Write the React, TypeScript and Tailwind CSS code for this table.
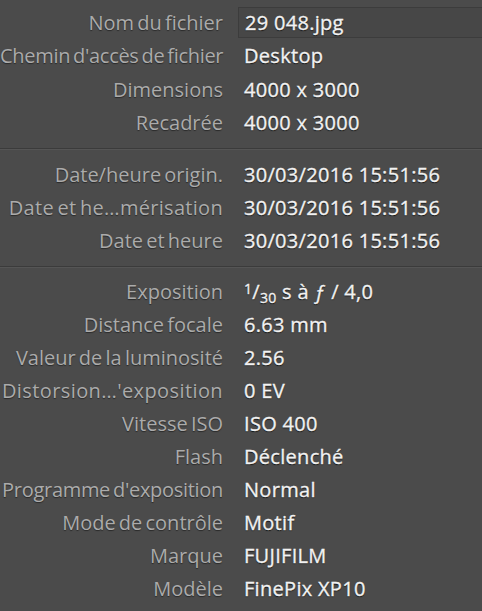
import React from 'react';

type Row = { label: string; value: React.ReactNode; boxed?: boolean; fit?: string };

const sections: Row[][] = [
  [
    { label: 'Nom du fichier', value: '29 048.jpg', boxed: true },
    { label: "Chemin d'accès de fichier", value: 'Desktop', fit: 'tracking-[-0.3px]' },
    { label: 'Dimensions', value: '4000 x 3000' },
    { label: 'Recadrée', value: '4000 x 3000' },
  ],
  [
    { label: 'Date/heure origin.', value: '30/03/2016 15:51:56' },
    { label: 'Date et he…mérisation', value: '30/03/2016 15:51:56', fit: 'tracking-[0.3px]' },
    { label: 'Date et heure', value: '30/03/2016 15:51:56' },
  ],
  [
    {
      label: 'Exposition',
      value: (
        <span>
          <span className="relative -top-[5px] text-[14px]">1</span>
          <span>/</span>
          <span className="relative top-[4px] text-[14px]">30</span> s à <span className="italic">ƒ</span> / 4,0
        </span>
      ),
    },
    { label: 'Distance focale', value: '6.63 mm' },
    { label: 'Valeur de la luminosité', value: '2.56' },
    { label: "Distorsion…'exposition", value: '0 EV', fit: 'tracking-[0.4px]' },
    { label: 'Vitesse ISO', value: 'ISO 400' },
    { label: 'Flash', value: 'Déclenché' },
    { label: "Programme d'exposition", value: 'Normal', fit: 'tracking-[-0.3px]' },
    { label: 'Mode de contrôle', value: 'Motif' },
    { label: 'Marque', value: 'FUJIFILM' },
    { label: 'Modèle', value: 'FinePix XP10' },
  ],
];

const valueCls =
  'text-[#f2f2f2] font-medium tracking-[0.3px] whitespace-nowrap [-webkit-text-stroke:0.35px_#f2f2f2] [text-shadow:0_1px_1px_rgba(0,0,0,0.8)]';

const MetaRow: React.FC<{ row: Row; h: string }> = ({ row, h }) => (
  <div className={`grid grid-cols-[223px_1fr] gap-x-[15px] items-center ${h}`}>
    <div
      className={`text-right text-[#ababab] whitespace-nowrap [word-spacing:-2px] [text-shadow:0_1px_1px_rgba(0,0,0,0.45)] ${
        row.fit ?? ''
      }`}
    >
      {row.label}
    </div>
    {row.boxed ? (
      <div className={`h-[31px] flex items-center pl-[6px] bg-[#474747] border border-[#3c3c3c] border-r-0 ${valueCls}`}>
        {row.value}
      </div>
    ) : (
      <div className={`pl-[6px] ${valueCls}`}>{row.value}</div>
    )}
  </div>
);

const pads = ['pt-[6px] pb-[8px]', 'pt-[9px] pb-[9px]', 'pt-[8px]'];
const heights = ['h-[33.5px]', 'h-[33px]', 'h-[33.1px]'];

export default function App() {
  return (
    <div className="w-[482px] h-[611px] overflow-hidden bg-[#4b4b4b] font-['Open_Sans',sans-serif] text-[20px] leading-none">
      {sections.map((rows, i) => (
        <div
          key={i}
          className={`${pads[i]} ${i > 0 ? 'border-t border-[#3b3b3b] shadow-[inset_0_1px_0_#555]' : ''}`}
        >
          {rows.map((r) => (
            <MetaRow key={r.label} row={r} h={heights[i]} />
          ))}
        </div>
      ))}
    </div>
  );
}
